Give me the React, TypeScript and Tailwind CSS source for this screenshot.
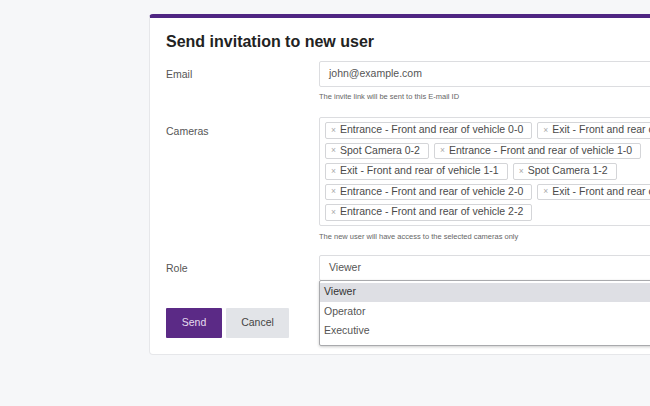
import React from 'react';

const cameras = [
  'Entrance - Front and rear of vehicle 0-0',
  'Exit - Front and rear of vehicle 0-1',
  'Spot Camera 0-2',
  'Entrance - Front and rear of vehicle 1-0',
  'Exit - Front and rear of vehicle 1-1',
  'Spot Camera 1-2',
  'Entrance - Front and rear of vehicle 2-0',
  'Exit - Front and rear of vehicle 2-1',
  'Entrance - Front and rear of vehicle 2-2',
];

const roles = ['Viewer', 'Operator', 'Executive'];

const App: React.FC = () => {
  return (
    <div className="w-[650px] h-[406px] overflow-hidden bg-[#f6f7f9] font-['Liberation_Sans',Arial,sans-serif]">
      <div className="ml-[149px] mt-[14px] w-[660px] bg-white rounded-[4px] border-t-4 border-t-[#4f2683] border-x border-b border-x-[#e6e7ea] border-b-[#e6e7ea] pl-[16px] pr-4 pt-[14px] pb-[16px]">
        <h1 className="text-[16px] leading-[20px] font-bold text-[#222]">Send invitation to new user</h1>

        {/* Email */}
        <div className="flex mt-[9px]">
          <label className="w-[153px] shrink-0 text-[10.5px] leading-[26px] text-[#555]">Email</label>
          <div className="w-[460px]">
            <div className="h-[26px] border border-[#dcdde0] rounded-[2px] pl-[9px] flex items-center text-[10.5px] text-[#555]">
              john@example.com
            </div>
            <p className="mt-[5px] text-[7.5px] leading-[10px] text-[#666]">The invite link will be sent to this E-mail ID</p>
          </div>
        </div>

        {/* Cameras */}
        <div className="flex mt-[15px]">
          <label className="w-[153px] shrink-0 text-[10.5px] leading-[26px] pt-[1px] text-[#555]">Cameras</label>
          <div className="w-[460px]">
            <div className="border border-[#dcdde0] rounded-[2px] pl-[5px] pr-[6px] pt-[4px] pb-[4px] flex flex-wrap gap-x-[5px] gap-y-[4px]">
              {cameras.map(c => (
                <span key={c} className="h-[16.5px] border border-[#d4d5d8] rounded-[2px] pl-[5px] pr-[8px] flex items-center text-[10.5px] text-[#4a4a4a] whitespace-nowrap">
                  <span className="text-[8.5px] text-[#aaa] mr-[4px]">×</span>
                  {c}
                </span>
              ))}
            </div>
            <p className="mt-[6px] text-[7.5px] leading-[10px] text-[#666]">The new user will have access to the selected cameras only</p>
          </div>
        </div>

        {/* Role */}
        <div className="flex mt-[13px]">
          <label className="w-[153px] shrink-0 text-[10.5px] leading-[26px] text-[#555]">Role</label>
          <div className="w-[460px] relative">
            <div className="h-[26px] border border-[#dcdde0] rounded-[2px] pl-[9px] flex items-center text-[10.5px] text-[#555]">
              Viewer
            </div>
            <div className="absolute left-0 top-[25px] w-full bg-white border border-[#a9aaad] rounded-[2px] shadow-[0_1px_3px_rgba(0,0,0,0.2)] pt-[2px] pb-[4px] z-10">
              {roles.map((r, i) => (
                <div
                  key={r}
                  className={`h-[19.5px] pl-[4px] flex items-center text-[10.5px] ${i === 0 ? 'bg-[#dedfe4] text-[#333]' : 'text-[#555]'}`}
                >
                  {r}
                </div>
              ))}
            </div>
          </div>
        </div>

        {/* Buttons */}
        <div className="flex gap-[4px] mt-[27px]">
          <button className="w-[56px] h-[30px] bg-[#5b2a86] text-[#e6ddf0] text-[10.5px] rounded-[1px]">Send</button>
          <button className="w-[63px] h-[30px] bg-[#e2e4e8] text-[#444] text-[10.5px] rounded-[1px]">Cancel</button>
        </div>
      </div>
    </div>
  );
};

export default App;
